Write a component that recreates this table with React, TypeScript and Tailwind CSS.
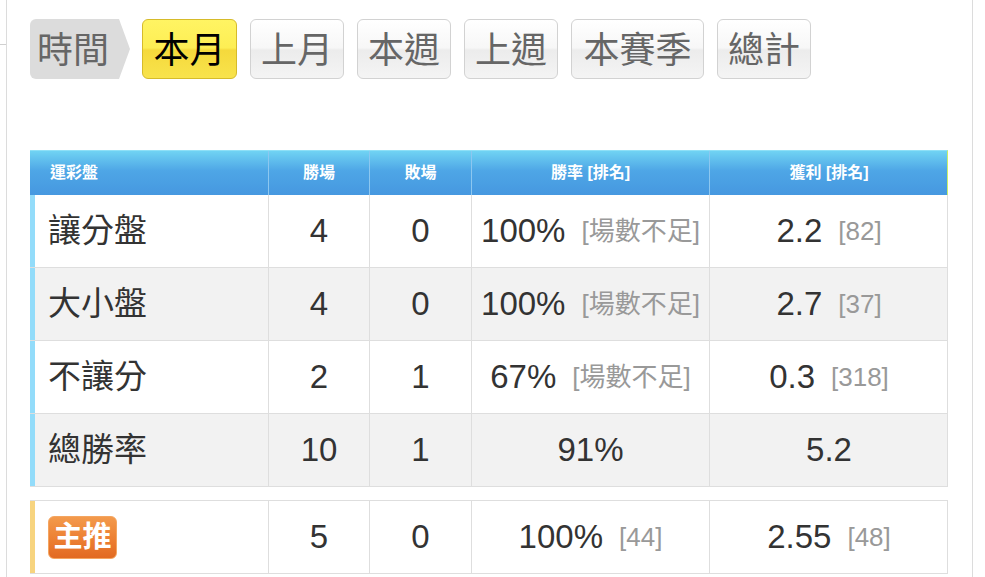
import React from "react";

interface StatRow {
  label: string;
  win: number;
  lose: number;
  rate: string;
  rateRank?: string;
  profit: string;
  profitRank?: string;
}

const rows: StatRow[] = [
  { label: "讓分盤", win: 4, lose: 0, rate: "100%", rateRank: "[場數不足]", profit: "2.2", profitRank: "[82]" },
  { label: "大小盤", win: 4, lose: 0, rate: "100%", rateRank: "[場數不足]", profit: "2.7", profitRank: "[37]" },
  { label: "不讓分", win: 2, lose: 1, rate: "67%", rateRank: "[場數不足]", profit: "0.3", profitRank: "[318]" },
  { label: "總勝率", win: 10, lose: 1, rate: "91%", profit: "5.2" },
];

const tabs = [
  { label: "本月", active: true, width: "w-[95px]" },
  { label: "上月", active: false, width: "w-[94px]" },
  { label: "本週", active: false, width: "w-[94px]" },
  { label: "上週", active: false, width: "w-[94px]" },
  { label: "本賽季", active: false, width: "w-[133px]" },
  { label: "總計", active: false, width: "w-[94px]" },
];

const gridCols = "grid grid-cols-[238px_101px_102px_238px_239px]";

const Value = ({ main, rank }: { main: string; rank?: string }) => (
  <div className="flex items-center justify-center h-full whitespace-nowrap">
    <span className="text-[33px] text-[#333]">{main}</span>
    {rank && <span className="ml-[16px] text-[26px] text-[#999]">{rank}</span>}
  </div>
);

const App: React.FC = () => {
  return (
    <div className="relative w-[985px] h-[577px] overflow-hidden bg-white font-['Liberation_Sans','Noto_Sans_CJK_TC',sans-serif]">
      {/* little tick outside the panel */}
      <div className="absolute left-0 top-[44px] w-[6px] h-px bg-[#d0d0d0]" />

      <div className="ml-[6px] w-[967px] h-full border-l border-r border-[#dcdcdc] pl-[23px] pt-[19px]">
        {/* period tabs */}
        <div className="flex items-center">
          <div className="flex h-[60px]">
            <div className="w-[88px] h-full bg-[#dcdcdc] rounded-l-[6px] flex items-center pl-[7px] pt-[3px] text-[36px] text-[#666] leading-none">
              時間
            </div>
            <svg width="12" height="60" viewBox="0 0 12 60" className="block">
              <polygon points="0,0 1,0 12,30 1,60 0,60" fill="#dcdcdc" />
            </svg>
          </div>
          <div className="flex gap-[13px] ml-[12px]">
            {tabs.map((t) => (
              <div
                key={t.label}
                className={`${t.width} h-[60px] rounded-[6px] flex items-center justify-center pt-[3px] text-[36px] leading-none ${
                  t.active
                    ? "border border-[#d6bb2a] text-black bg-[linear-gradient(to_bottom,#fff463_0%,#fdee54_48%,#f5d93c_52%,#f8e34c_100%)]"
                    : "border border-[#d2d2d2] text-[#666] bg-[linear-gradient(to_bottom,#ffffff_0%,#f7f7f7_48%,#ececec_52%,#f4f4f4_100%)]"
                }`}
              >
                {t.label}
              </div>
            ))}
          </div>
        </div>

        {/* stats table */}
        <div className="mt-[71px] w-[918px]">
          <div className={`${gridCols} h-[45px] border-t border-[#8ee0f7] text-white font-bold text-[16px] bg-[linear-gradient(to_bottom,#70d3f3_0%,#4ea6e6_45%,#4698e0_100%)] border-r border-r-[#c8ef6a]`}>
            <div className="flex items-center pl-[20px]">運彩盤</div>
            <div className="flex items-center justify-center border-l border-[#8cc7f0]">勝場</div>
            <div className="flex items-center justify-center border-l border-[#8cc7f0]">敗場</div>
            <div className="flex items-center justify-center border-l border-[#8cc7f0]">勝率 [排名]</div>
            <div className="flex items-center justify-center border-l border-[#8cc7f0]">獲利 [排名]</div>
          </div>

          {rows.map((r, i) => (
            <div
              key={r.label}
              className={`${gridCols} h-[73px] border-b border-r border-[#dedede] ${i % 2 === 1 ? "bg-[#f2f2f2]" : "bg-white"}`}
            >
              <div className="flex items-center border-l-[5px] border-[#93dcfa] pl-[13px] text-[33px] text-[#333]">
                {r.label}
              </div>
              <div className="flex items-center justify-center border-l border-[#dedede] text-[33px] text-[#333]">{r.win}</div>
              <div className="flex items-center justify-center border-l border-[#dedede] text-[33px] text-[#333]">{r.lose}</div>
              <div className="border-l border-[#dedede]">
                <Value main={r.rate} rank={r.rateRank} />
              </div>
              <div className="border-l border-[#dedede]">
                <Value main={r.profit} rank={r.profitRank} />
              </div>
            </div>
          ))}

          {/* featured pick row */}
          <div className={`${gridCols} h-[74px] mt-[13px] border-t border-b border-r border-[#dedede] bg-white`}>
            <div className="flex items-center border-l-[5px] border-[#f7d47f] pl-[13px]">
              <div className="w-[69px] h-[43px] rounded-[6px] border border-[#f4a560] bg-[linear-gradient(to_bottom,#f39a4c_0%,#ec7f32_55%,#e26a22_100%)] flex items-center justify-center text-white font-bold text-[29px] leading-none">
                主推
              </div>
            </div>
            <div className="flex items-center justify-center border-l border-[#dedede] text-[33px] text-[#333]">5</div>
            <div className="flex items-center justify-center border-l border-[#dedede] text-[33px] text-[#333]">0</div>
            <div className="border-l border-[#dedede]">
              <Value main="100%" rank="[44]" />
            </div>
            <div className="border-l border-[#dedede]">
              <Value main="2.55" rank="[48]" />
            </div>
          </div>
        </div>
      </div>
    </div>
  );
};

export default App;
